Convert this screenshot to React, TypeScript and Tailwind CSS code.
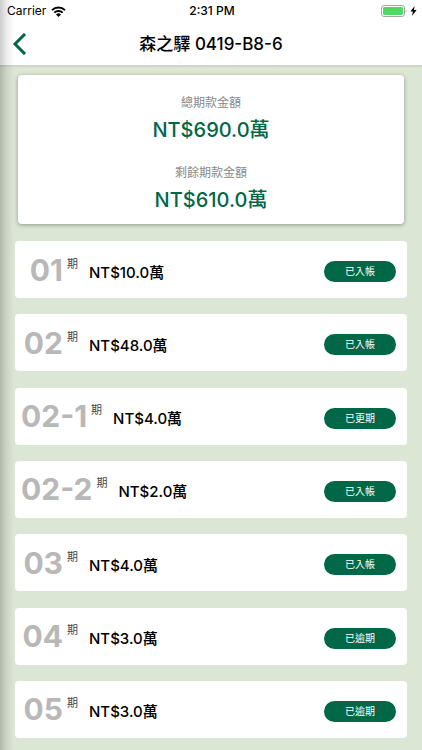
type Installment = {
  term: string;
  amount: string;
  status: string;
};

const installments: Installment[] = [
  { term: "01", amount: "NT$10.0萬", status: "已入帳" },
  { term: "02", amount: "NT$48.0萬", status: "已入帳" },
  { term: "02-1", amount: "NT$4.0萬", status: "已更期" },
  { term: "02-2", amount: "NT$2.0萬", status: "已入帳" },
  { term: "03", amount: "NT$4.0萬", status: "已入帳" },
  { term: "04", amount: "NT$3.0萬", status: "已逾期" },
  { term: "05", amount: "NT$3.0萬", status: "已逾期" },
];

function StatusBar() {
  return (
    <div className="grid h-[22px] grid-cols-3 items-center pl-[7px] pr-[5px] text-[12px] leading-[22px]">
      <div className="flex items-center gap-[5px]">
        <span>Carrier</span>
        <svg width="15" height="11" viewBox="0 0 15 11" fill="none" stroke="#000" strokeWidth="2">
          <path d="M1 4.1a9.4 9.4 0 0 1 13 0" />
          <path d="M3.3 6.6a6 6 0 0 1 8.4 0" />
          <path d="M7.5 11 5 8.4a3.6 3.6 0 0 1 5 0z" fill="#000" stroke="none" />
        </svg>
      </div>
      <span className="text-center font-medium">2:31 PM</span>
      <div className="flex items-center justify-end gap-[3px]">
        <svg width="26" height="12" viewBox="0 0 26 12">
          <rect x="0.5" y="0.5" width="23" height="11" rx="2.6" fill="#fff" stroke="#a3a3a3" />
          <rect x="2" y="2" width="20" height="8" rx="1.4" fill="#4cd964" />
          <path d="M24.6 4.2c1.2.5 1.2 3.1 0 3.6z" fill="#a3a3a3" />
        </svg>
        <svg width="7" height="10" viewBox="0 0 7 10">
          <path d="M4.6 0 0.4 5.6h2.5L2 10l4.6-5.9H3.9z" fill="#000" />
        </svg>
      </div>
    </div>
  );
}

function InstallmentRow({ term, amount, status }: Installment) {
  return (
    <li className="flex h-[57px] items-center rounded bg-white pl-[6px] pr-[11px]">
      {/* Term number */}
      <div className="flex items-start">
        <span className="min-w-[42px] text-right text-[30px] leading-[36px] font-bold text-[#b8b8b8]">
          {term}
        </span>
        <span className="ml-1 mt-1 text-[11px] leading-[16px] text-[#444]">期</span>
      </div>

      <span className="ml-[11px] pt-[6px] text-[15px] leading-[20px] font-medium text-black">{amount}</span>

      <span className="ml-auto mt-1 w-[72px] rounded-full bg-[#006747] text-center text-[10px] leading-[21px] text-white">
        {status}
      </span>
    </li>
  );
}

export default function App() {
  return (
    <div className="relative flex min-h-screen flex-col bg-[#dce6d5] font-['Inter','Noto_Sans_CJK_TC',sans-serif] text-black">
      {/* Header */}
      <header className="border-b border-[#cfd3cb] bg-white shadow-[0_1px_1px_rgba(0,0,0,0.06)]">
        <StatusBar />
        <div className="grid h-[43px] grid-cols-[40px_1fr_40px] items-center">
          <button type="button" aria-label="返回" className="flex h-full items-center pl-3">
            <svg width="15" height="22" viewBox="0 0 15 22" fill="none" stroke="#006747" strokeWidth="3">
              <path d="M13 1 3 11l10 10" />
            </svg>
          </button>
          <h1 className="text-center text-[17px] leading-[22px] font-medium">森之驛 0419-B8-6</h1>
        </div>
      </header>

      <main className="flex flex-1 flex-col pt-[9px] pb-3">
        {/* Totals */}
        <dl className="mx-[18px] rounded bg-white pt-[18px] pb-[10px] text-center shadow-[0_1px_4px_rgba(0,0,0,0.35)]">
          <dt className="text-[12px] leading-[20px] text-[#888]">總期款金額</dt>
          <dd className="mt-[3px] text-[20px] leading-[28px] font-medium text-[#006747]">NT$690.0萬</dd>
          <dt className="mt-[19px] text-[12px] leading-[20px] text-[#888]">剩餘期款金額</dt>
          <dd className="mt-[3px] text-[20px] leading-[28px] font-medium text-[#006747]">NT$610.0萬</dd>
        </dl>

        {/* Installments */}
        <ul className="mx-[15px] mt-[17px] flex flex-1 flex-col justify-between gap-4">
          {installments.map((item) => (
            <InstallmentRow key={item.term} {...item} />
          ))}
        </ul>
      </main>

      {/* Shade along the left edge */}
      <div className="pointer-events-none absolute inset-y-0 left-0 w-[14px] bg-linear-to-r from-black/20 via-black/7 to-transparent" />
    </div>
  );
}
